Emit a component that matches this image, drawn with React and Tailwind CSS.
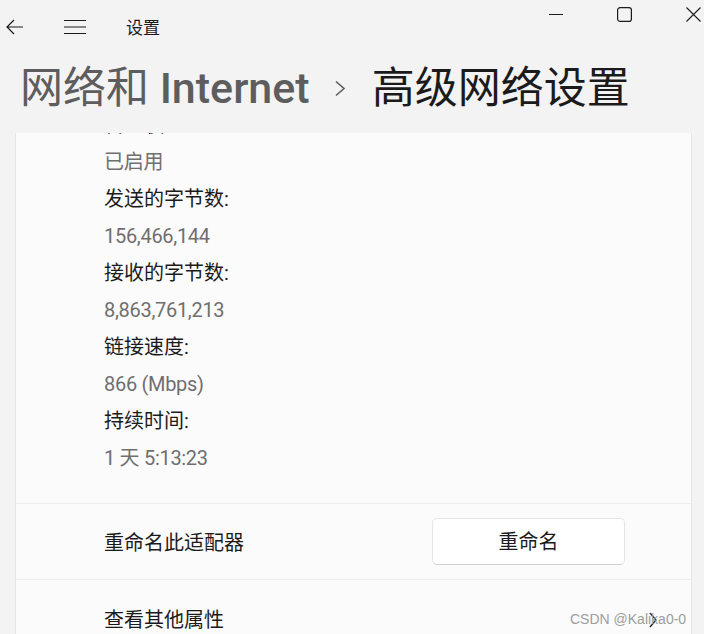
import React from 'react'

const details = [
  ['管理状态:', '已启用'],
  ['发送的字节数:', '156,466,144'],
  ['接收的字节数:', '8,863,761,213'],
  ['链接速度:', '866 (Mbps)'],
  ['持续时间:', '1 天 5:13:23'],
]

export default function App() {
  return (
    <div className="relative w-[704px] h-[634px] overflow-hidden bg-[#f3f3f3] text-[#1b1b1b] font-[Roboto,'Noto_Sans_CJK_SC',sans-serif]">

      {/* title bar */}
      <div className="flex justify-between h-[54px]">
        <div className="flex items-center">
          <svg className="ml-[6px] w-[18px] h-[16px]" viewBox="0 0 18 16" fill="none" stroke="#1b1b1b" strokeWidth="1.2">
            <path d="M17 8H1.5M8 1L1 8l7 7" />
          </svg>
          <svg className="ml-[40px] w-[22px] h-[16px]" viewBox="0 0 22 16" fill="none" stroke="#1b1b1b" strokeWidth="1.2">
            <path d="M0 1.5h22M0 8h22M0 14.5h22" />
          </svg>
          <span className="ml-[40px] text-[17px] leading-none mt-[2px]">设置</span>
        </div>
        <div className="flex items-start pt-[7px] pr-[3px]">
          <svg className="w-[14px] h-[14px]" viewBox="0 0 14 14" fill="none" stroke="#1b1b1b" strokeWidth="1">
            <path d="M0 7.5h14" />
          </svg>
          <svg className="ml-[54px] w-[15px] h-[15px]" viewBox="0 0 15 15" fill="none" stroke="#1b1b1b" strokeWidth="1.2">
            <rect x="0.6" y="0.6" width="13.8" height="13.8" rx="2.5" />
          </svg>
          <svg className="ml-[54px] w-[15px] h-[15px]" viewBox="0 0 15 15" fill="none" stroke="#1b1b1b" strokeWidth="1.1">
            <path d="M0.5 0.5l14 14M14.5 0.5l-14 14" />
          </svg>
        </div>
      </div>

      {/* breadcrumb heading */}
      <div className="flex items-center h-[68px] pl-[20px] text-[43px] leading-[68px] whitespace-nowrap">
        <span className="text-[#5d5d5d]">网络和 <span className="font-medium">Internet</span></span>
        <svg className="ml-[24px] w-[12px] h-[17px]" viewBox="0 0 12 17" fill="none" stroke="#5d5d5d" strokeWidth="1.6">
          <path d="M2 1.5l8 7-8 7" />
        </svg>
        <span className="ml-[26px] text-[#1b1b1b]">高级网络设置</span>
      </div>

      {/* scrolled card */}
      <div className="mt-[11px] ml-[15px] w-[677px] h-[501px] overflow-hidden bg-[#fbfbfb] border-x border-[#e5e5e5]">
        <div className="-mt-[26px] pl-[88px] text-[20px] leading-[37px]">
          {details.map(([label, value]) => (
            <div key={label}>
              <div>{label}</div>
              <div className="text-[#6f6f6f] tracking-[-0.3px]">{value}</div>
            </div>
          ))}
        </div>

        <div className="mt-[26px] border-t border-[#ededed] h-[76px] flex items-center justify-between pl-[88px] pr-[66px]">
          <span className="text-[20px] mt-[3px]">重命名此适配器</span>
          <button className="w-[193px] h-[47px] rounded-[5px] bg-white border border-[#e5e5e5] border-b-[#d0d0d0] text-[20px] text-[#1b1b1b]">
            重命名
          </button>
        </div>

        <div className="border-t border-[#ededed] h-[80px] flex items-center justify-between pl-[88px] pr-[34px]">
          <span className="text-[20px]">查看其他属性</span>
          <svg className="w-[8px] h-[16px]" viewBox="0 0 8 16" fill="none" stroke="#1b1b1b" strokeWidth="1.3">
            <path d="M1 1l6 7-6 7" />
          </svg>
        </div>
      </div>

      {/* watermark */}
      <span className="absolute left-[570px] top-[610px] text-[14px] leading-[18px] text-[#9d9d9d] font-['Liberation_Sans',Arial,sans-serif] whitespace-nowrap">
        CSDN @Kalika0-0
      </span>
    </div>
  )
}
